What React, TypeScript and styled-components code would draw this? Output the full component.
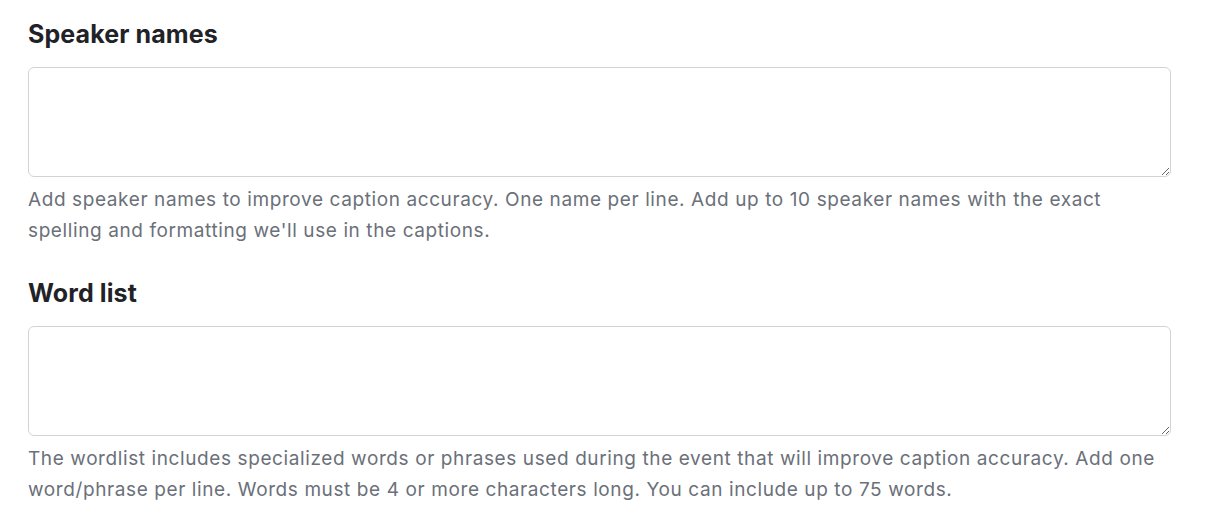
import styled, { createGlobalStyle } from 'styled-components';

const GlobalStyle = createGlobalStyle`
  body {
    margin: 0;
    background: #fff;
    font-family: Inter, 'Noto Sans', sans-serif;
  }
`;

const Page = styled.div`
  padding: 18px 49px 0 28px;
  display: flex;
  flex-direction: column;
`;

const Field = styled.div`
  display: flex;
  flex-direction: column;
  & + & {
    margin-top: 31px;
  }
`;

const Label = styled.label`
  font-size: 25px;
  line-height: 32px;
  font-weight: 700;
  letter-spacing: 0.1px;
  color: #1f2328;
  margin-bottom: 17px;
`;

const TextArea = styled.textarea`
  box-sizing: border-box;
  width: 100%;
  height: 110px;
  border: 1px solid #d0d4d9;
  border-radius: 6px;
  padding: 10px 12px;
  font-family: inherit;
  font-size: 18px;
  resize: vertical;
  outline: none;
  &:focus {
    border-color: #9aa3ad;
  }
`;

const Help = styled.p`
  margin: 7px 0 0;
  font-size: 19px;
  line-height: 31px;
  letter-spacing: 0.6px;
  color: #6b7079;
`;

export default function App() {
  return (
    <Page>
      <GlobalStyle />
      <Field>
        <Label htmlFor="speakers">Speaker names</Label>
        <TextArea id="speakers" />
        <Help>
          Add speaker names to improve caption accuracy. One name per line. Add up to 10 speaker names with the exact
          spelling and formatting we'll use in the captions.
        </Help>
      </Field>
      <Field>
        <Label htmlFor="words">Word list</Label>
        <TextArea id="words" />
        <Help>
          The wordlist includes specialized words or phrases used during the event that will improve caption accuracy. Add one
          word/phrase per line. Words must be 4 or more characters long. You can include up to 75 words.
        </Help>
      </Field>
    </Page>
  );
}
